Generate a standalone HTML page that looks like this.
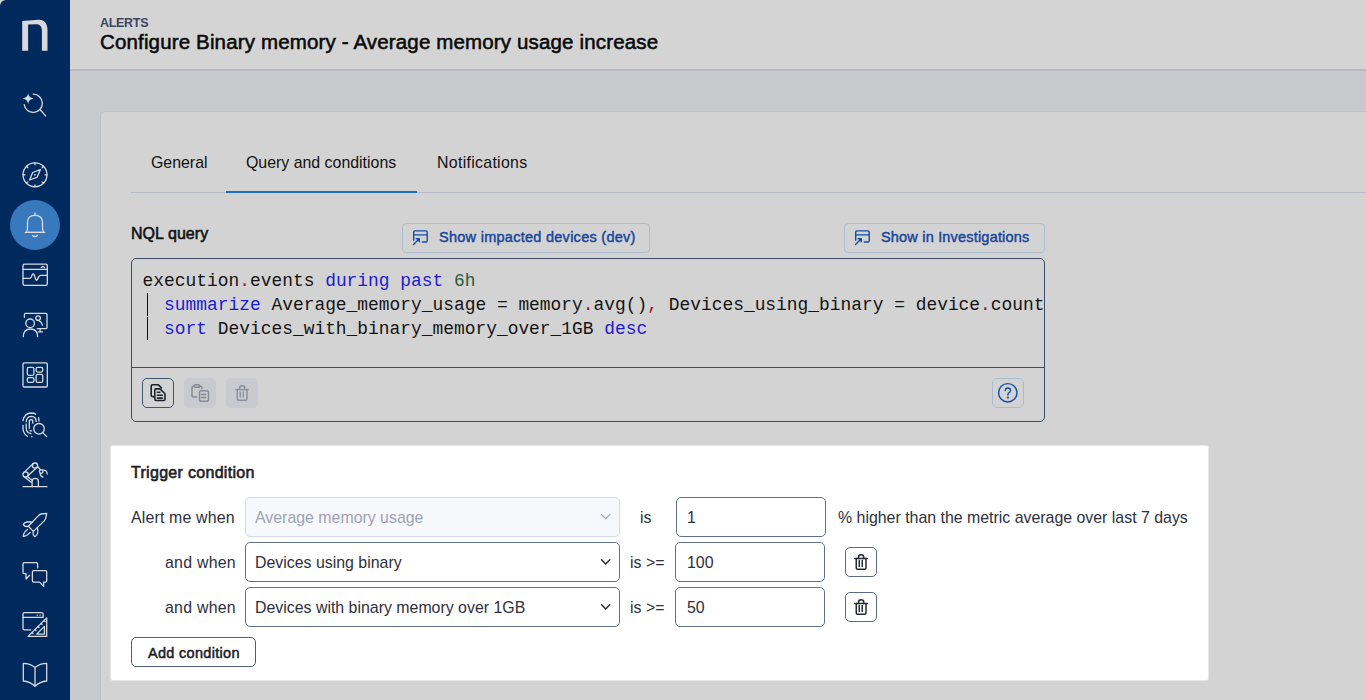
<!DOCTYPE html>
<html><head><meta charset="utf-8">
<style>
*{box-sizing:border-box;margin:0;padding:0}
html,body{width:1366px;height:700px;overflow:hidden;background:#c8c9cc;font-family:"Liberation Sans",sans-serif;color:#111}
.abs{position:absolute}
#corner{position:absolute;left:0;top:0;width:8px;height:8px;background:#d4d4d4}
#side{position:absolute;left:0;top:0;width:70px;height:700px;background:#00295d;border-top-left-radius:6px}
#hdr{position:absolute;left:70px;top:0;width:1296px;height:71px;background:#d4d4d4;border-bottom:2px solid #b8bbc6}
.t{position:absolute;white-space:nowrap;line-height:1}
#card{position:absolute;left:100px;top:111px;width:1300px;height:620px;background:#d3d3d3;border:1px solid #bfc0cc;border-radius:5px}
.btn{position:absolute;border:1px solid #aebdd0;border-radius:4px;background:#d3d3d3}
.btxt{position:absolute;white-space:nowrap;line-height:1;color:#17479c;-webkit-text-stroke:0.45px #17479c;font-size:14.5px}
#editor{position:absolute;left:131px;top:258px;width:914px;height:164px;border:1px solid #3b4c65;border-radius:5px;background:#d3d3d3}
.code{position:absolute;left:142.6px;font-family:"Liberation Mono",monospace;font-size:17.9px;color:#141414;white-space:pre;line-height:24px}
.kw{color:#1c1ccf}.num{color:#2b5b3c}.pu{color:#a31515}
.pipe{position:absolute;left:146.6px;width:1.4px;height:23px;background:#0a0d38}
#hl{position:absolute;left:111px;top:446px;width:1097px;height:234px;background:#fff;border-radius:2px;box-shadow:0 0 0 1px rgba(255,255,255,0.45)}
.sel{position:absolute;left:245px;width:375px;height:40px;border:1px solid #61718b;border-radius:5px;background:#fff}
.inp{position:absolute;height:40px;border:1px solid #61718b;border-radius:5px;background:#fff}
.lbl{position:absolute;font-size:15.9px;color:#2e303b;white-space:nowrap;line-height:1}
svg{position:absolute;overflow:visible}
.ic{fill:none;stroke:#d9dadf;stroke-width:1.3;stroke-linecap:round;stroke-linejoin:round}
</style></head><body>
<div id="corner"></div>
<div id="side"></div>
<!-- logo -->
<svg style="left:0;top:0" width="70" height="70"><path fill="#d9d9dc" d="M22.2 50.8V21.1L38.3 19.7C44.2 19.3 47.5 23.3 47.5 30V50.8H41.9V30.6C41.9 26.6 40 24.2 36.4 24.2L28.1 24.6V50.8Z"/></svg>
<!-- AI search -->
<svg class="ic" style="left:15px;top:85px" width="40" height="40"><path d="M18.3 9.2A9.1 9.1 0 1 1 9.2 19.6"/><path d="M25.2 24.7L30.6 30.9"/><path fill="#d9dadf" stroke="none" d="M13.1 8.3Q13.6 12.6 18.5 13.4Q13.6 14.2 13.1 18.9Q12.6 14.2 7.7 13.4Q12.6 12.6 13.1 8.3Z"/></svg>
<!-- compass -->
<svg class="ic" style="left:15px;top:155px" width="40" height="40"><circle cx="20" cy="19.8" r="12"/><path d="M20 7.8V9.8M20 29.8V31.8M8 19.8H10M30 19.8H32M11.5 11.3L12.9 12.7M28.5 11.3L27.1 12.7M11.5 28.3L12.9 26.9M28.5 28.3L27.1 26.9"/><path d="M25.4 14.6L22.3 22.1L14.6 25L17.7 17.5Z"/><rect x="19.2" y="19" width="1.6" height="1.6" fill="#d9dadf" stroke="none"/></svg>
<!-- bell active -->
<div class="abs" style="left:10px;top:200px;width:50px;height:50px;border-radius:50%;background:#3879be"></div>
<svg class="ic" style="left:15px;top:205px" width="40" height="40"><path d="M20 8V10"/><path d="M11.5 27.3Q12.5 25.5 12.5 22V17.5Q12.5 10.3 20 10.3Q27.5 10.3 27.5 17.5V22Q27.5 25.5 28.5 27.3Z"/><path d="M10.2 27.3H29.8"/><path d="M17.6 30.4Q20 32.6 22.4 30.4"/></svg>
<!-- monitoring -->
<svg class="ic" style="left:15px;top:255px" width="40" height="40"><rect x="8" y="9.2" width="24.3" height="21.1" rx="1.6"/><path d="M8 14.3H32.3"/><path d="M26.2 12.6Q27.9 10.5 29.6 12.6"/><path d="M8 23.4H14.6Q15.6 23.4 16.3 22L17.3 19.8Q18.4 17.6 19.4 20.2L20.4 23.6Q21.3 26.6 22.6 24.1L23.8 21.6Q24.5 20.3 25.8 20.3H32.3"/></svg>
<!-- person monitor -->
<svg class="ic" style="left:15px;top:305px" width="40" height="40"><path d="M9.4 12.3V9.4Q9.4 8.3 10.5 8.3H30.9Q32 8.3 32 9.4V22.6Q32 23.7 30.9 23.7H22.3"/><path d="M25.1 23.7V26.9M23.4 26.9H27.4"/><circle cx="23.1" cy="13.1" r="2.3"/><path d="M21.8 15.2Q26.5 16 27.4 20.2"/><circle cx="15.1" cy="18.3" r="4.3"/><path d="M8.3 31.7Q8.3 24 15.4 24Q22.6 24 22.6 31.7"/></svg>
<!-- grid -->
<svg class="ic" style="left:15px;top:355px" width="40" height="40"><rect x="8" y="7.8" width="24.3" height="24.2" rx="1.3"/><rect x="12.3" y="12.3" width="6.6" height="8" rx="1.5"/><rect x="12.3" y="22.6" width="6.6" height="4.8" rx="1.5"/><rect x="21.1" y="12.3" width="6.6" height="4.8" rx="1.5"/><rect x="21.1" y="19.4" width="6.6" height="8" rx="1.5"/></svg>
<!-- fingerprint -->
<svg class="ic" style="left:15px;top:405px" width="40" height="40"><path d="M8 15.6Q9.5 8.2 16 8Q19.2 8 20.6 9.3"/><path d="M8 20.5V24Q8.5 28.8 12.5 31.3"/><path d="M16.5 31.6L17 31.6"/><path d="M11.2 16.5Q11.8 11.4 16.5 11.4Q21 11.6 21.2 16.6"/><path d="M11.2 19V23.5Q11.6 28 16 28.6"/><path d="M23.6 12.6L24 16"/><path d="M14.3 23.3V15.6Q14.5 14.6 16.2 14.6Q17.8 14.7 17.8 16V18.2"/><path d="M15 25.5Q15.5 26 16.6 25.9"/><circle cx="24" cy="23.8" r="5.3"/><path d="M27.8 27.6L31.7 31.6"/></svg>
<!-- robot -->
<svg class="ic" style="left:15px;top:455px" width="40" height="40"><path d="M8 31.7H32"/><path d="M17.1 31.5V26.4Q17.1 23.4 20.2 23.4Q23.4 23.4 23.4 26.4V31.5"/><circle cx="20" cy="10.6" r="2.6"/><circle cx="10.6" cy="19.4" r="2.6"/><path d="M18.1 8.8L8.7 17.6M21.9 12.4L12.4 21.2"/><path d="M12.3 21.5L17.5 25.5M9.4 21.9L16.2 27.3"/><path d="M22.5 11.5L25.3 14.5"/><circle cx="26.2" cy="16.6" r="1.8"/><path d="M27.6 15.2Q31.7 14.3 32.2 19"/><path d="M25.2 18.6Q25.3 21.5 28 22.2"/></svg>
<!-- rocket -->
<svg class="ic" style="left:15px;top:505px" width="40" height="40"><path d="M31.7 8.3L26.3 9Q24.8 9.3 23.5 10.6L13.3 21.2L18.4 26.4L29 16.1Q30.3 14.8 30.7 13.3Z"/><path d="M17.5 17.3Q11 15.5 8.3 19.4Q9.3 22 13.3 21.4"/><path d="M22.3 22.5Q24.2 29 20 31.7Q17.5 30.5 18.2 26.4"/><path d="M12.5 24.5Q8.3 27.5 8.3 31.4Q11.8 31.3 15.2 27.4"/></svg>
<!-- chat -->
<svg class="ic" style="left:15px;top:555px" width="40" height="40"><path d="M22.6 12.9V9Q22.6 7.7 21.3 7.7H9.3Q8 7.7 8 9V17.4Q8 18.6 9.3 18.6H11V24L14.6 20.3"/><path d="M18.7 15.7H30.4Q31.7 15.7 31.7 17V25.8Q31.7 27.1 30.4 27.1H28.6V31.4L24.6 27.1H18.7Q17.4 27.1 17.4 25.8V17Q17.4 15.7 18.7 15.7Z"/></svg>
<!-- design -->
<svg class="ic" style="left:15px;top:605px" width="40" height="40"><path d="M15.7 24.9H9.3Q8 24.9 8 23.6V9Q8 7.7 9.3 7.7H26.8Q28.1 7.7 28.1 9V12.3"/><path d="M8 12.3H28.1"/><path d="M22.2 10.2H22.4M25 10.2H25.2"/><path d="M13.1 31.4L31.7 12.9V31.4Z"/><path d="M21.7 29.1L29.4 21.4V29.1Z"/><path d="M17 27.5L18 28.5M20 24.5L21 25.5M23 21.5L24 22.5M26 18.5L27 19.5M29 15.5L30 16.5"/></svg>
<!-- book -->
<svg class="ic" style="left:15px;top:655px" width="40" height="40"><path d="M20 12.4Q15 8.3 8.3 8.3V26Q15 26.5 20 31.4Q25 26.5 31.7 26V8.3Q25 8.3 20 12.4V31.4"/></svg>

<div id="hdr"></div>
<div class="t" style="left:100px;top:17px;font-size:12.5px;font-weight:bold;color:#3d4461;letter-spacing:-0.3px">ALERTS</div>
<div class="t" style="left:100px;top:32px;font-size:20.5px;color:#0a0a0a;-webkit-text-stroke:0.55px #0a0a0a;letter-spacing:0.15px">Configure Binary memory - Average memory usage increase</div>
<div id="card"></div>
<div class="t" style="left:151px;top:155px;font-size:15.9px">General</div>
<div class="t" style="left:246px;top:155px;font-size:15.9px">Query and conditions</div>
<div class="t" style="left:437px;top:155px;font-size:15.9px;letter-spacing:0.3px">Notifications</div>
<div class="abs" style="left:131px;top:192px;width:1235px;height:1px;background:#b6b9c6"></div>
<div class="abs" style="left:226px;top:191px;width:191px;height:2px;background:#1d6ebf"></div>
<div class="t" style="left:131px;top:226px;font-size:16px;-webkit-text-stroke:0.55px #111;letter-spacing:0.05px">NQL query</div>

<div class="btn" style="left:402px;top:223px;width:248px;height:30px"></div>
<svg style="left:404px;top:226px" width="24" height="24" fill="none" stroke="#1250a8" stroke-width="1.4" stroke-linecap="round"><path d="M9.7 14.3V6.05Q9.7 4.85 10.9 4.85H22Q23.2 4.85 23.2 6.05V14.85Q23.2 16.05 22 16.05H18.3"/><path d="M9.7 8.9H23.2"/><path d="M9.5 18.5L15.3 12.7M12.2 12.7H15.3V15.8"/></svg>
<div class="btxt" style="left:439px;top:230px;letter-spacing:0.27px">Show impacted devices (dev)</div>
<div class="btn" style="left:844px;top:223px;width:201px;height:30px"></div>
<svg style="left:846px;top:226px" width="24" height="24" fill="none" stroke="#1250a8" stroke-width="1.4" stroke-linecap="round"><path d="M9.7 14.3V6.05Q9.7 4.85 10.9 4.85H22Q23.2 4.85 23.2 6.05V14.85Q23.2 16.05 22 16.05H18.3"/><path d="M9.7 8.9H23.2"/><path d="M9.5 18.5L15.3 12.7M12.2 12.7H15.3V15.8"/></svg>
<div class="btxt" style="left:881px;top:230px;letter-spacing:0.19px">Show in Investigations</div>

<div id="editor"></div>
<div class="abs" style="left:132px;top:367px;width:912px;height:1px;background:#3b4c65"></div>
<div class="code" style="top:269px">execution<span class="pu">.</span>events <span class="kw">during</span> <span class="kw">past</span> <span class="num">6h</span></div>
<div class="code" style="top:293px;width:901px;overflow:hidden">  <span class="kw">summarize</span> Average_memory_usage = memory<span class="pu">.</span>avg()<span class="pu">,</span> Devices_using_binary = device<span class="pu">.</span>count()</div>
<div class="code" style="top:317px">  <span class="kw">sort</span> Devices_with_binary_memory_over_1GB <span class="kw">desc</span></div>
<div class="pipe" style="top:293px"></div>
<div class="pipe" style="top:317px"></div>

<!-- toolbar -->
<div class="abs" style="left:142px;top:378px;width:32px;height:30px;border:1px solid #3f5470;border-radius:5px"></div>
<div class="abs" style="left:184px;top:378px;width:32px;height:30px;border-radius:5px;background:#c9cacf"></div>
<div class="abs" style="left:226px;top:378px;width:32px;height:30px;border-radius:5px;background:#c9cacf"></div>
<svg style="left:142px;top:378px" width="32" height="30" fill="none" stroke="#1f222b" stroke-width="1.6" stroke-linejoin="round" stroke-linecap="round"><path d="M12.3 18.65H10.5Q9.2 18.65 9.2 17.35V8.05Q9.2 6.75 10.5 6.75H15.6Q16.4 6.75 17 7.4L19.4 9.9"/><path d="M14.1 10.9H17.3Q18 10.9 18.5 11.4L22.5 15.3Q23 15.8 23 16.5V21.2Q23 22.5 21.7 22.5H14.1Q12.8 22.5 12.8 21.2V12.2Q12.8 10.9 14.1 10.9Z"/><path d="M15.4 14.3H17.9M15.4 17.2H20.3M15.4 20.1H20.3"/></svg>
<svg style="left:184px;top:378px" width="32" height="30" fill="none" stroke="#858b98" stroke-width="1.5" stroke-linejoin="round" stroke-linecap="round"><path d="M10.2 8.2H9.3Q8 8.2 8 9.5V17.8Q8 19.1 9.3 19.1H12.6"/><path d="M15.5 8.2H16.6Q17.9 8.2 17.9 9.5V10.6"/><rect x="10.2" y="6.8" width="5.3" height="2.5" rx="0.8"/><rect x="15.5" y="12.8" width="9" height="10.5" rx="1.8"/><path d="M17.4 16.5H21.8M17.4 19.4H21.8"/></svg>
<svg style="left:226px;top:378px" width="32" height="30" fill="none" stroke="#8a909b" stroke-width="1.4" stroke-linejoin="round"><path d="M9.25 11.6H22.75"/><path d="M13.5 11.5V10.3Q13.5 7.75 16.1 7.75Q18.75 7.75 18.75 10.3V11.5"/><path d="M11.25 11.5V21Q11.25 22.2 12.45 22.2H19.8Q21 22.2 21 21V11.5"/><path d="M14.25 13.6V19.5M17.25 13.6V19.5"/></svg>
<div class="abs" style="left:992px;top:378px;width:32px;height:30px;border:1px solid #a9bed2;border-radius:5px"></div>
<svg style="left:992px;top:378px" width="32" height="30" fill="none" stroke="#1250a8" stroke-width="1.4" stroke-linecap="round"><circle cx="15.8" cy="14.8" r="9.2"/><path d="M13.3 12.6Q13.3 10 15.9 10Q18.5 10 18.5 12.4Q18.5 14 16.8 14.8Q15.9 15.3 15.9 16.6V17"/><circle cx="15.9" cy="19.6" r="0.45" fill="#1250a8"/></svg>

<div id="hl"></div>
<div class="t" style="left:131px;top:465px;font-size:16px;color:#1c1d26;-webkit-text-stroke:0.6px #1c1d26;letter-spacing:0.3px">Trigger condition</div>
<div class="lbl" style="left:131px;top:510px;letter-spacing:0.17px">Alert me when</div>
<div class="sel" style="top:497px;background:#f7f8fc;border-color:#d3d9e8"></div>
<div class="lbl" style="left:255px;top:510px;color:#9ea3b1">Average memory usage</div>
<svg style="left:596px;top:507px" width="20" height="20" fill="none" stroke="#a4abbc" stroke-width="1.3" stroke-linecap="round"><path d="M5.6 7.6L9.7 11.8L13.8 7.6"/></svg>
<div class="lbl" style="left:640px;top:510px">is</div>
<div class="inp" style="left:676px;top:497px;width:150px"></div>
<div class="lbl" style="left:687px;top:510px">1</div>
<div class="lbl" style="left:838px;top:510px">% higher than the metric average over last 7 days</div>

<div class="lbl" style="left:165px;top:555px;letter-spacing:0.25px">and when</div>
<div class="sel" style="top:542px"></div>
<div class="lbl" style="left:255px;top:555px">Devices using binary</div>
<svg style="left:596px;top:552px" width="20" height="20" fill="none" stroke="#272b36" stroke-width="1.5" stroke-linecap="round"><path d="M5.6 7.7L9.7 11.9L13.8 7.7"/></svg>
<div class="lbl" style="left:630px;top:555px">is &gt;=</div>
<div class="inp" style="left:675px;top:542px;width:150px"></div>
<div class="lbl" style="left:687px;top:555px">100</div>
<div class="abs" style="left:845px;top:547px;width:32px;height:30px;border:1px solid #5a6b87;border-radius:5px"></div>
<svg style="left:845px;top:547px" width="32" height="30" fill="none" stroke="#262a35" stroke-width="1.5" stroke-linejoin="round" stroke-linecap="round"><path d="M9.7 11.5H22.3"/><path d="M13.5 11.5V10.3Q13.5 7.75 16.1 7.75Q18.75 7.75 18.75 10.3V11.5"/><path d="M11.25 11.5V21Q11.25 22.2 12.45 22.2H19.8Q21 22.2 21 21V11.5"/><path d="M14.25 13.6V19.5M17.25 13.6V19.5"/></svg>

<div class="lbl" style="left:165px;top:600px;letter-spacing:0.25px">and when</div>
<div class="sel" style="top:587px"></div>
<div class="lbl" style="left:255px;top:600px">Devices with binary memory over 1GB</div>
<svg style="left:596px;top:597px" width="20" height="20" fill="none" stroke="#272b36" stroke-width="1.5" stroke-linecap="round"><path d="M5.6 7.7L9.7 11.9L13.8 7.7"/></svg>
<div class="lbl" style="left:630px;top:600px">is &gt;=</div>
<div class="inp" style="left:675px;top:587px;width:150px"></div>
<div class="lbl" style="left:687px;top:600px">50</div>
<div class="abs" style="left:845px;top:592px;width:32px;height:30px;border:1px solid #5a6b87;border-radius:5px"></div>
<svg style="left:845px;top:592px" width="32" height="30" fill="none" stroke="#262a35" stroke-width="1.5" stroke-linejoin="round" stroke-linecap="round"><path d="M9.7 11.5H22.3"/><path d="M13.5 11.5V10.3Q13.5 7.75 16.1 7.75Q18.75 7.75 18.75 10.3V11.5"/><path d="M11.25 11.5V21Q11.25 22.2 12.45 22.2H19.8Q21 22.2 21 21V11.5"/><path d="M14.25 13.6V19.5M17.25 13.6V19.5"/></svg>

<div class="abs" style="left:131px;top:637px;width:125px;height:30px;border:1px solid #505f77;border-radius:5px"></div>
<div class="t" style="left:148px;top:646px;font-size:14.5px;color:#1c1d26;-webkit-text-stroke:0.5px #1c1d26;letter-spacing:0.3px">Add condition</div>
</body></html>
